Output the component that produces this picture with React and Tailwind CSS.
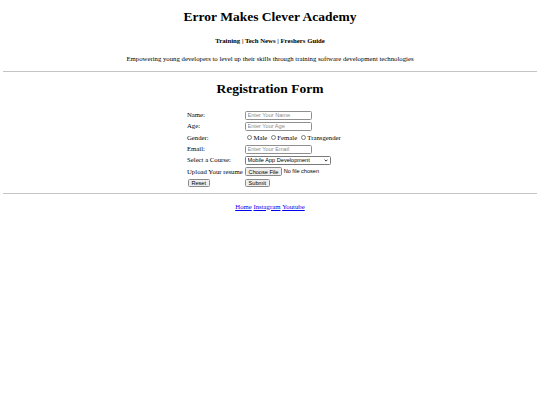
import React from "react";

const serif = "font-['Liberation_Serif','Times_New_Roman',serif]";
const sans = "font-['Liberation_Sans',Arial,sans-serif]";

function Label({ children }) {
  return <div className={`text-[6.75px] leading-[7.8px] text-black whitespace-nowrap ${serif}`}>{children}</div>;
}

function TextInput({ placeholder }) {
  return (
    <input
      type="text"
      placeholder={placeholder}
      className={`block w-[67px] h-[9px] border border-[#8f8f8f] rounded-[1.5px] px-[1.5px] py-0 text-[5.6px] leading-[7px] bg-white outline-none placeholder:text-[#8a8a8a] ${sans}`}
    />
  );
}

function Radio({ label, name }) {
  return (
    <label className="flex items-center mr-[1.7px]">
      <input
        type="radio"
        name={name}
        className="block appearance-none w-[5px] h-[5px] rounded-full border border-[#7a7a7a] bg-white ml-[2.1px] mr-[1.3px] mt-[0.4px] shrink-0"
      />
      <span className={`text-[6.75px] leading-[7.8px] text-black ${serif}`}>{label}</span>
    </label>
  );
}

function Btn({ children }) {
  return (
    <button
      type="button"
      className={`block h-[8.5px] px-[2.6px] border border-[#8a8a8a] rounded-[1.5px] bg-[#efefef] text-[5.6px] leading-[6px] text-black ${sans}`}
    >
      {children}
    </button>
  );
}

function Row({ label, children }) {
  return (
    <div className="grid grid-cols-[58px_1fr] items-center h-[11.33px]">
      <div className="flex items-center">{label}</div>
      <div className="flex items-center">{children}</div>
    </div>
  );
}

export default function App() {
  return (
    <div className={`w-[540px] h-[405px] bg-white px-[3.4px] pt-[9px] ${serif} text-black leading-[7.8px]`}>
      <div className="flex flex-col items-center">
        <h1 className="text-[13.5px] leading-[15.5px] font-bold">Error Makes Clever Academy</h1>
        <h4 className="mt-[12.8px] text-[6.75px] leading-[7.8px] font-bold">Training | Tech News | Freshers Guide</h4>
        <p className="mt-[9.6px] text-[6.75px] leading-[7.8px]">
          Empowering young developers to level up their skills through training software development technologies
        </p>
      </div>
      <div className="mt-[8.4px] border-t border-[#c4c4c4]" />
      <div className="flex flex-col items-center">
        <h1 className="mt-[8.7px] text-[13.5px] leading-[15.5px] font-bold">Registration Form</h1>
        <form className="mt-[13.3px] w-[166px] ml-[0px]" onSubmit={(e) => e.preventDefault()}>
          <Row label={<Label>Name:</Label>}>
            <TextInput placeholder="Enter Your Name" />
          </Row>
          <Row label={<Label>Age:</Label>}>
            <TextInput placeholder="Enter Your Age" />
          </Row>
          <Row label={<Label>Gender:</Label>}>
            <div className="flex items-center">
              <Radio name="g" label="Male" />
              <Radio name="g" label="Female" />
              <Radio name="g" label="Transgender" />
            </div>
          </Row>
          <Row label={<Label>Email:</Label>}>
            <TextInput placeholder="Enter Your Email" />
          </Row>
          <Row label={<Label>Select a Course:</Label>}>
            <div className="relative w-[86px] h-[9px]">
              <select
                className={`block appearance-none w-full h-full border border-[#7a7a7a] rounded-[1.5px] bg-white pl-[1.5px] pr-[8px] py-0 text-[5.6px] leading-[7px] text-black outline-none ${sans}`}
                defaultValue="mad"
              >
                <option value="mad">Mobile App Development</option>
                <option value="web">Web Development</option>
              </select>
              <svg
                className="absolute right-[2.8px] top-[2.9px] w-[4.2px] h-[3px] pointer-events-none"
                viewBox="0 0 14 10"
              >
                <path d="M2 2 L7 7 L12 2" fill="none" stroke="#000" strokeWidth="2.6" />
              </svg>
            </div>
          </Row>
          <Row label={<Label>Upload Your resume</Label>}>
            <div className="flex items-center">
              <Btn>Choose File</Btn>
              <span className={`ml-[1.6px] text-[5.6px] leading-[7px] text-black whitespace-nowrap ${sans}`}>No file chosen</span>
            </div>
          </Row>
          <Row label={<div className="flex ml-[0.8px]"><Btn>Reset</Btn></div>}>
            <Btn>Submit</Btn>
          </Row>
        </form>
      </div>
      <div className="mt-[4.4px] border-t border-[#c4c4c4]" />
      <div className="mt-[8.5px] flex justify-center gap-[1.7px] text-[6.75px] leading-[7.8px]">
        <a href="#" className="text-[#0000ee] underline">Home</a>
        <a href="#" className="text-[#0000ee] underline">Instagram</a>
        <a href="#" className="text-[#0000ee] underline">Youtube</a>
      </div>
    </div>
  );
}
